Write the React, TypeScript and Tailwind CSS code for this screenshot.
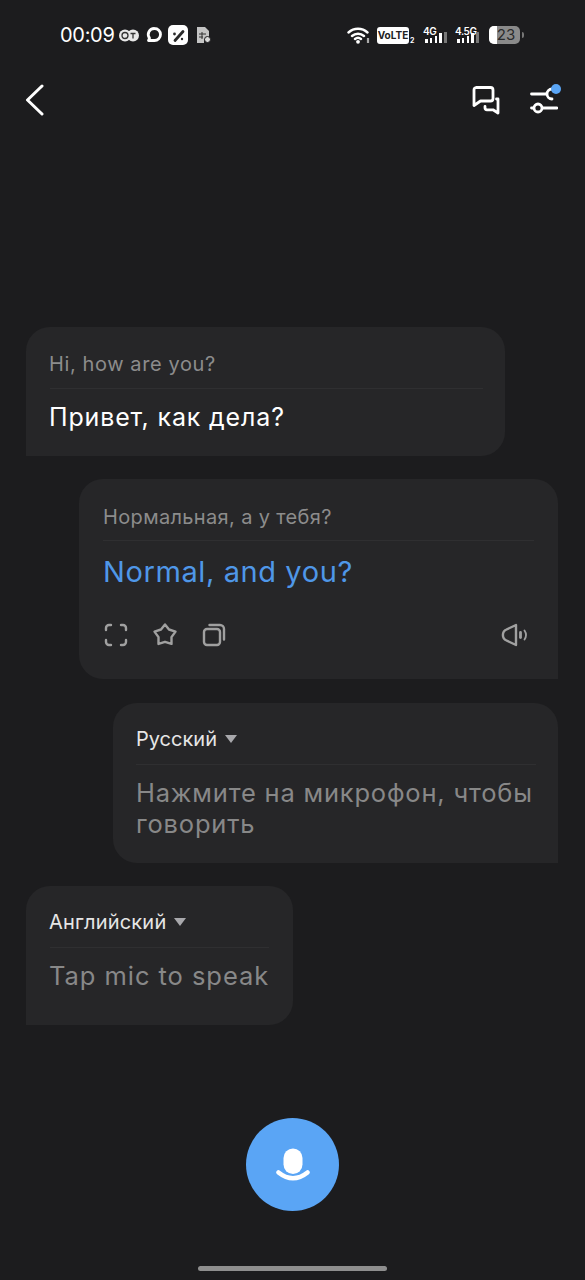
const font = { fontFamily: 'Inter, "Noto Sans", sans-serif' }

function StatusBar() {
  return (
    <div className="h-[68px] flex items-center justify-between pl-[60px] pr-[61px] pt-[2px] text-white">
      <div className="flex items-center">
        <span className="w-[53px] text-[20px] leading-none tracking-[-0.3px] whitespace-nowrap">00:09</span>
        {/* carrier badge */}
        <svg width="20" height="13" viewBox="0 0 20 13" className="ml-[6px]">
          <circle cx="6" cy="6.500" r="6" fill="#e8e8e8" />
          <circle cx="14" cy="6.500" r="6" fill="#e8e8e8" />
          <circle cx="6" cy="6.500" r="3" fill="none" stroke="#333" strokeWidth="1.300" />
          <path d="M11.500 4.500h5M14 4.500v5" stroke="#333" strokeWidth="1.300" />
        </svg>
        {/* chat */}
        <svg width="18" height="18" viewBox="0 0 18 18" className="ml-[6px]">
          <path d="M9.500 2.500a6 6 0 0 1 0 12H3.500l1-2.400A6 6 0 0 1 9.500 2.500z" fill="none" stroke="#fff" strokeWidth="2.800" strokeLinejoin="round" />
        </svg>
        {/* app tile */}
        <div className="w-[20px] h-[20px] rounded-[5px] bg-white flex items-center justify-center ml-[5px]">
          <svg width="15" height="15" viewBox="0 0 15 15">
            <path d="M4 12.500L12 3.500" stroke="#2a2a2a" strokeWidth="2.800" strokeLinecap="round" />
            <circle cx="3.500" cy="6" r="1.400" fill="#2a2a2a" />
            <circle cx="11" cy="11" r="1.200" fill="#2a2a2a" />
          </svg>
        </div>
        {/* sim settings */}
        <svg width="16" height="18" viewBox="0 0 16 18" className="ml-[8px]">
          <path d="M1 1h8l4 4v8H8v4H1z" fill="#c4c4c4" />
          <path d="M3 8h7M3 11h4M6 6v7" stroke="#333" strokeWidth="1" />
          <circle cx="11.500" cy="13.500" r="3" fill="#d8d8d8" stroke="#1c1c1e" strokeWidth="1" />
        </svg>
      </div>
      <div className="flex items-center">
        {/* wifi */}
        <svg width="24" height="18" viewBox="0 0 24 18" className="mr-[6px]">
          <path d="M1.500 6.500a14 14 0 0 1 19 0M5 10a9 9 0 0 1 12 0M8 13a4.500 4.500 0 0 1 6 0" fill="none" stroke="#fff" strokeWidth="2.400" strokeLinecap="round" />
          <circle cx="11" cy="15.800" r="1.900" fill="#fff" />
          <path d="M21 12v5" stroke="#aaa" strokeWidth="2.200" />
        </svg>
        <div className="w-[32px] h-[17px] rounded-[3px] bg-white text-[#222] text-[10px] font-bold leading-[17px] text-center">VoLTE</div>
        <span className="w-[4px] text-[7px] font-bold self-end mb-[-1px] ml-[1px] mr-[9px]">2</span>
        <Net label="4G" />
        <div className="w-[6px]" />
        <Net label="4.5G" />
        {/* battery */}
        <div className="ml-[8px] w-[31px] h-[18px] rounded-[5px] bg-[#8a8a8a] overflow-hidden relative">
          <div className="absolute left-0 top-0 bottom-0 w-[8px] bg-white" />
          <div className="absolute inset-0 pl-[3px] text-center text-[15px] leading-[18px] text-[#2a2a2a]">23</div>
        </div>
        <div className="w-[2px] h-[6px] bg-[#777] ml-[2px] rounded-r-sm" />
      </div>
    </div>
  )
}

function Net({ label }: { label: string }) {
  const bars = [4, 5, 7, 10, 11]
  return (
    <div className="relative w-[26px] h-[20px]">
      <span className="absolute left-0 top-[1px] text-[10px] font-semibold leading-[10px] tracking-[-0.4px]">{label}</span>
      <div className="absolute left-[2px] bottom-[2px] flex items-end gap-[2.250px]">
        {bars.map((h, i) => (
          <div key={i} className={i === 4 ? 'w-[2.500px] bg-[#777]' : 'w-[2.500px] bg-white'} style={{ height: h }} />
        ))}
      </div>
    </div>
  )
}

function Header() {
  return (
    <div className="h-[64px] flex items-center justify-between pl-[25px] pr-[27px] mb-[195px]">
      <svg width="20" height="32" viewBox="0 0 20 32" fill="none" stroke="#fff" strokeWidth="3" strokeLinecap="round" strokeLinejoin="round">
        <path d="M17 2L2.500 16 17 30" />
      </svg>
      <div className="flex items-center gap-[29px]">
        <svg width="30" height="30" viewBox="0 0 30 30" fill="none" stroke="#fff" strokeWidth="2.800" strokeLinejoin="round" strokeLinecap="round">
          <path d="M5 2.500h14.500a2.500 2.500 0 0 1 2.500 2.500v8.500a2.500 2.500 0 0 1-2.500 2.500H9.500L3 20.500V5a2.500 2.500 0 0 1 2-2.500z" />
          <path d="M25.500 14h1.500V28l-5-3.200H16a2 2 0 0 1-2-2V21.500" />
        </svg>
        <div className="relative w-[28px] h-[30px]">
          <svg width="28" height="30" viewBox="0 0 28 30" fill="none" stroke="#fff" strokeWidth="2.800" strokeLinecap="round">
            <path d="M1.500 9h15" />
            <path d="M22 4a5 5 0 1 0 0 10" />
            <circle cx="8" cy="23" r="4" />
            <path d="M1.500 23h2M12.500 23h14.500" />
          </svg>
          <div className="absolute right-[-3px] top-[-1px] w-[10px] h-[10px] rounded-full bg-[#5aa5f5]" />
        </div>
      </div>
    </div>
  )
}

function Divider() {
  return <div className="h-px bg-[#2f2f31]" />
}

function ActionIcons() {
  return (
    <div className="flex items-center mt-[31px] pr-[7px]">
      <svg width="26" height="26" viewBox="0 0 26 26" fill="none" stroke="#a0a0a0" strokeWidth="2.400" strokeLinecap="round" strokeLinejoin="round">
        <path d="M8 3H6A3 3 0 0 0 3 6V8M18 3h2A3 3 0 0 1 23 6V8M3 18v2A3 3 0 0 0 6 23H8M23 18v2a3 3 0 0 1-3 3H18" />
      </svg>
      <svg width="26" height="26" viewBox="0 0 26 26" fill="none" stroke="#a0a0a0" strokeWidth="2.400" strokeLinejoin="round" className="ml-[23px]">
        <path d="M13 2.500L17 7.500 23.500 9.600 19.500 15.100 19.500 21.900 13 19.800 6.500 21.900 6.500 15.100 2.500 9.600 9 7.500z" />
      </svg>
      <svg width="26" height="26" viewBox="0 0 26 26" fill="none" stroke="#a0a0a0" strokeWidth="2.400" strokeLinecap="round" strokeLinejoin="round" className="ml-[23px]">
        <rect x="3" y="7" width="16" height="16" rx="3" />
        <path d="M8.500 3h10.500a4 4 0 0 1 4 4v10.500" />
      </svg>
      <svg width="26" height="26" viewBox="0 0 26 26" fill="none" stroke="#a0a0a0" strokeLinecap="round" strokeLinejoin="round" className="ml-auto">
        <path d="M15 3v20L5.500 18.500a6 6 0 0 1 0-11z" strokeWidth="2.400" />
        <path d="M19.500 10.500v5" strokeWidth="2.800" />
        <path d="M23.500 8.500a8 8 0 0 1 0 9" strokeWidth="1.800" />
      </svg>
    </div>
  )
}

export default function App() {
  return (
    <div className="relative w-[585px] h-[1280px] bg-[#1c1c1e] overflow-hidden" style={font}>
      <StatusBar />
      <Header />

      <div className="flex flex-col">
        {/* Source phrase */}
        <div className="ml-[26px] w-[479px] h-[129px] bg-[#262628] rounded-[24px] rounded-bl-none px-[24px] pt-[23px]">
          <div className="ml-[-1px] text-[20px] leading-[28px] text-[#8c8c8c] tracking-[0.6px] pb-[10px]">Hi, how are you?</div>
          <div className="mr-[-2px]"><Divider /></div>
          <div className="ml-[-1px] text-[25px] leading-[34px] text-white tracking-[0.85px] mt-[11px]">Привет, как дела?</div>
        </div>

        {/* Translation */}
        <div className="ml-[79px] mt-[23px] w-[479px] h-[200px] bg-[#262628] rounded-[24px] rounded-br-none px-[24px] pt-[23px]">
          <div className="text-[20px] leading-[28px] text-[#8c8c8c] tracking-[0.35px] pt-[1px] pb-[9px]">Нормальная, а у тебя?</div>
          <Divider />
          <div className="text-[29px] leading-[38px] text-[#4f97e8] tracking-[0.6px] mt-[12px]">Normal, and you?</div>
          <ActionIcons />
        </div>

        {/* Russian input */}
        <div className="ml-[113px] mt-[24px] w-[445px] h-[160px] bg-[#262628] rounded-[24px] rounded-br-none pl-[23px] pr-[22px] pt-[22px]">
          <div className="flex items-center text-[20px] leading-[28px] text-[#e6e6e6] pb-[11px]">
            Русский
            <span className="ml-[8px] w-0 h-0 border-x-[6px] border-x-transparent border-t-[8px] border-t-[#a8a8ac]" />
          </div>
          <Divider />
          <div className="text-[25.500px] leading-[31px] text-[#888888] tracking-[0.8px] mt-[12px] whitespace-pre-line">{'Нажмите на микрофон, чтобы\nговорить'}</div>
        </div>

        {/* English input */}
        <div className="ml-[26px] mt-[23px] w-[267px] h-[139px] bg-[#262628] rounded-[24px] rounded-bl-none pl-[24px] pr-[24px] pt-[22px]">
          <div className="ml-[-1px] flex items-center text-[20px] leading-[28px] text-[#e6e6e6] tracking-[0.2px] pb-[11px]">
            Английский
            <span className="ml-[8px] w-0 h-0 border-x-[6px] border-x-transparent border-t-[8px] border-t-[#a8a8ac]" />
          </div>
          <Divider />
          <div className="ml-[-1px] text-[25.500px] leading-[31px] text-[#888888] tracking-[0.95px] mt-[12px] whitespace-nowrap">Tap mic to speak</div>
        </div>
      </div>

      {/* Mic button */}
      <div className="flex justify-center mt-[93px]">
        <div className="w-[93px] h-[93px] rounded-full bg-[#5aa5f5] flex items-center justify-center">
          <svg width="34" height="34" viewBox="0 0 34 34">
            <rect x="7.500" y="0.500" width="19" height="25.500" rx="9.500" fill="#fff" />
            <path d="M2.500 24.500Q17 36 31.500 24.500" fill="none" stroke="#fff" strokeWidth="4.500" strokeLinecap="round" />
          </svg>
        </div>
      </div>

      {/* Home indicator */}
      <div className="absolute left-[198px] top-[1266px] w-[189px] h-[5px] rounded-full bg-[#8e8e8e]" />
    </div>
  )
}
